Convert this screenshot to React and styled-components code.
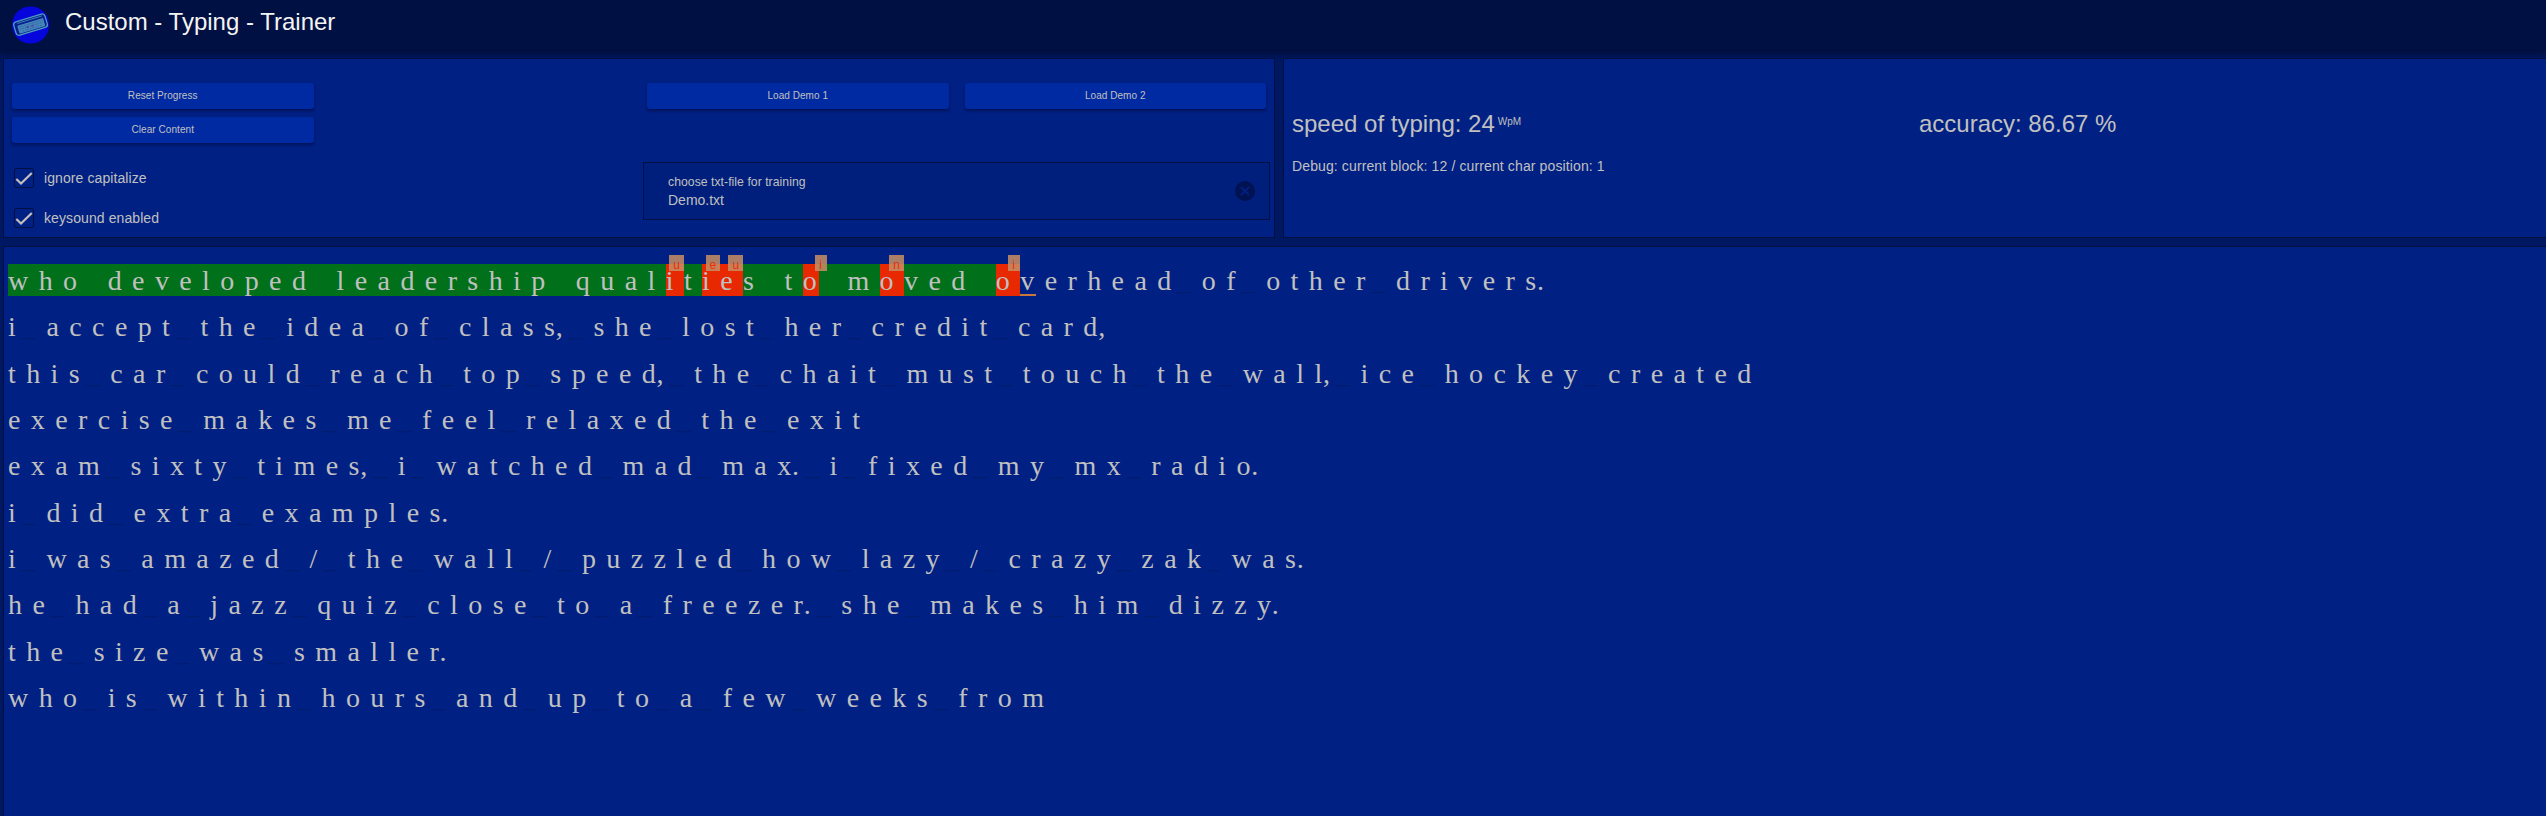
import React from 'react';
import styled, { createGlobalStyle, css } from 'styled-components';

const Global = createGlobalStyle`
  * { box-sizing: border-box; }
  html, body, #root { height: 100%; }
  body {
    margin: 0;
    overflow: hidden;
    background: #001862;
    color: #c0c0c0;
    font-family: "Liberation Sans", Arial, sans-serif;
  }
`;

const Page = styled.div`
  display: flex;
  flex-direction: column;
  width: 100%;
  height: 100%;
  overflow: hidden;
`;

const Header = styled.header`
  flex: none;
  display: flex;
  align-items: flex-start;
  height: 50px;
  padding: 6px 12px 0;
  gap: 15px;
  background: #001042;
  box-shadow: 0 2px 8px 2px rgba(0, 10, 40, 0.75);
`;

const Title = styled.h1`
  margin: 2px 0 0;
  font-size: 24px;
  line-height: 28px;
  font-weight: 400;
  color: #f4f4f4;
`;

const Main = styled.main`
  flex: 1;
  display: flex;
  flex-direction: column;
  gap: 8px;
  margin: 0 -8px -8px 0;
  padding: 8px 0 0 3px;
`;

const TopRow = styled.div`
  display: flex;
  gap: 8px;
  height: 180px;
`;

const Panel = styled.section`
  border: 1px solid #001042;
  background: #002083;
`;

const Controls = styled(Panel)`
  flex: none;
  width: 1272px;
  display: grid;
  grid-template-columns: repeat(4, 1fr);
  grid-template-rows: 95px 1fr;
`;

const ButtonCell = styled.div`
  display: flex;
  flex-direction: column;
  gap: 8px;
  padding: 24px 8px 0;
`;

const Button = styled.button`
  height: 26px;
  padding: 0;
  border: 0;
  border-radius: 3px;
  background: #002aa2;
  color: #c0c0c0;
  font: 10px/26px "Liberation Sans", Arial, sans-serif;
  letter-spacing: 0.06px;
  box-shadow: 0 2px 3px rgba(0, 10, 60, 0.6);
`;

const Options = styled.div`
  grid-column: 1 / 3;
  display: flex;
  flex-direction: column;
  gap: 20px;
  padding: 14px 10px 0;
`;

const Option = styled.label`
  display: flex;
  align-items: center;
  gap: 10px;
  font-size: 14px;
  line-height: 20px;
  letter-spacing: 0.09px;
`;

const Box = styled.span`
  display: flex;
  width: 20px;
  height: 20px;
  border: 1px solid #001042;
  border-radius: 2px;
`;

const FileField = styled.div`
  grid-column: 3 / 5;
  display: flex;
  justify-content: space-between;
  align-items: center;
  margin: 8px 4px 0;
  height: 58px;
  padding: 0 14px 0 24px;
  border: 1px solid #001042;
  background: #001f7c;
`;

const FileText = styled.div`
  display: flex;
  flex-direction: column;
  padding-bottom: 1px;
`;

const FileLabel = styled.span`
  font-size: 12.2px;
  line-height: 18px;
  letter-spacing: 0.05px;
`;

const FileName = styled.span`
  font-size: 14px;
  line-height: 18px;
`;

const Stats = styled(Panel)`
  flex: 1;
  display: grid;
  grid-template-columns: 627px 1fr;
  grid-template-rows: 28px 16px;
  row-gap: 20px;
  padding: 51px 8px 0;
`;

const Stat = styled.div`
  font-size: 24px;
  line-height: 28px;
`;

const Unit = styled.span`
  margin-left: 3px;
  font-size: 10px;
  vertical-align: 7px;
  line-height: 1;
`;

const Debug = styled.div`
  grid-column: 1 / 3;
  font-size: 14px;
  line-height: 16px;
  letter-spacing: 0.12px;
`;

const Trainer = styled(Panel)`
  flex: 1;
  padding: 10px 4px 0;
  font-family: "Liberation Serif", "Times New Roman", serif;
  font-size: 28px;
  font-kerning: none;
`;

const Line = styled.div`
  display: flex;
  align-items: center;
  height: 46.33px;
  white-space: pre;
`;

const Char = styled.span`
  position: relative;
  flex: none;
  height: 32px;
  line-height: 34px;
  padding: 0 2px 0 0;
  letter-spacing: 0.3em;
  ${p => p.$kind === 'space' && css`
    margin-left: -0.3em;
    padding-left: 0.15em;
    color: #001c70;
  `}
  ${p => p.$kind === 'mark' && css`margin-left: -9.6px;`}
  ${p => p.$state === 'ok' && css`background: #00701a;`}
  ${p => p.$state === 'ok' && p.$kind === 'space' && css`color: #00701a;`}
  ${p => p.$state === 'bad' && css`background: #e82800;`}
  ${p => p.$state === 'current' && css`
    &::after {
      content: '';
      position: absolute;
      left: 0;
      bottom: 0;
      width: calc(100% - 0.3em);
      height: 2px;
      background: #c8783c;
    }
  `}
`;

const Typo = styled.span`
  position: absolute;
  z-index: 1;
  right: 0;
  top: -9px;
  height: 16px;
  padding: 2px 4px 0;
  min-width: 12px;
  background: rgba(196, 140, 100, 0.87);
  color: #e83008;
  font: 12px/16px "Liberation Sans", Arial, sans-serif;
  letter-spacing: 0;
`;

const LINES = [
  'who developed leadership qualities to moved overhead of other drivers.',
  'i accept the idea of class, she lost her credit card,',
  'this car could reach top speed, the chait must touch the wall, ice hockey created',
  'exercise makes me feel relaxed the exit',
  'exam sixty times, i watched mad max. i fixed my mx radio.',
  'i did extra examples.',
  'i was amazed / the wall / puzzled how lazy / crazy zak was.',
  'he had a jazz quiz close to a freezer. she makes him dizzy.',
  'the size was smaller.',
  'who is within hours and up to a few weeks from',
];

const CURSOR = 45;
const TYPOS = { 29: 'u', 31: 'e', 32: 'u', 36: 'i', 39: 'n', 44: 'i' };

function kindOf(c) {
  if (c === ' ') return 'space';
  return c === ',' || c === '.' ? 'mark' : 'letter';
}

function stateOf(line, i) {
  if (line > 0 || i > CURSOR) return 'todo';
  if (i === CURSOR) return 'current';
  return TYPOS[i] ? 'bad' : 'ok';
}

function Logo() {
  return (
    <svg width="38" height="38" viewBox="0 0 38 38">
      <circle cx="18.6" cy="19" r="18.6" fill="#0505dc" />
      <g transform="rotate(-17 18.6 18.5)">
        <rect x="2.2" y="11.6" width="32.6" height="14" rx="3" fill="#08208c" stroke="#4d9cc0" strokeWidth="1.3" />
        <rect x="5.4" y="15.8" width="27" height="8.4" rx="1" fill="#4585ba" />
        <path d="M6 13.6h26" stroke="#4d9cc0" strokeWidth="0.7" />
        <path d="M7 17.8h24M7 20h24M9 22.4h20" stroke="#2a5ca0" strokeWidth="0.7" strokeDasharray="1.6 1" />
        <path d="M14 20.2h2M19 20.2h2" stroke="#5a3c9c" strokeWidth="1.8" />
      </g>
    </svg>
  );
}

function Check({ children }) {
  return (
    <Option>
      <Box>
        <svg width="18" height="18" viewBox="0 0 18 18" fill="none">
          <path d="M1.3 10L6 14.5L16.8 4" stroke="#c4c0bc" strokeWidth="2.2" />
        </svg>
      </Box>
      {children}
    </Option>
  );
}

export default function App() {
  return (
    <Page>
      <Global />
      <Header>
        <Logo />
        <Title>Custom - Typing - Trainer</Title>
      </Header>
      <Main>
        <TopRow>
          <Controls>
            <ButtonCell>
              <Button>Reset Progress</Button>
              <Button>Clear Content</Button>
            </ButtonCell>
            <ButtonCell />
            <ButtonCell><Button>Load Demo 1</Button></ButtonCell>
            <ButtonCell><Button>Load Demo 2</Button></ButtonCell>
            <Options>
              <Check>ignore capitalize</Check>
              <Check>keysound enabled</Check>
            </Options>
            <FileField>
              <FileText>
                <FileLabel>choose txt-file for training</FileLabel>
                <FileName>Demo.txt</FileName>
              </FileText>
              <svg width="20" height="20" viewBox="0 0 20 20">
                <circle cx="10" cy="10" r="10" fill="#001252" />
                <path d="M5.8 5.8l8.4 8.4M14.2 5.8l-8.4 8.4" stroke="#002083" strokeWidth="1.8" />
              </svg>
            </FileField>
          </Controls>
          <Stats>
            <Stat>speed of typing: 24<Unit>WpM</Unit></Stat>
            <Stat>accuracy: 86.67 %</Stat>
            <Debug>Debug: current block: 12 / current char position: 1</Debug>
          </Stats>
        </TopRow>
        <Trainer>
          {LINES.map((text, line) => (
            <Line key={line}>
              {[...text].map((c, i) => {
                const state = stateOf(line, i);
                return (
                  <Char key={i} $kind={kindOf(c)} $state={state}>
                    {c === ' ' ? '_' : c}
                    {state === 'bad' && <Typo>{TYPOS[i]}</Typo>}
                  </Char>
                );
              })}
            </Line>
          ))}
        </Trainer>
      </Main>
    </Page>
  );
}
